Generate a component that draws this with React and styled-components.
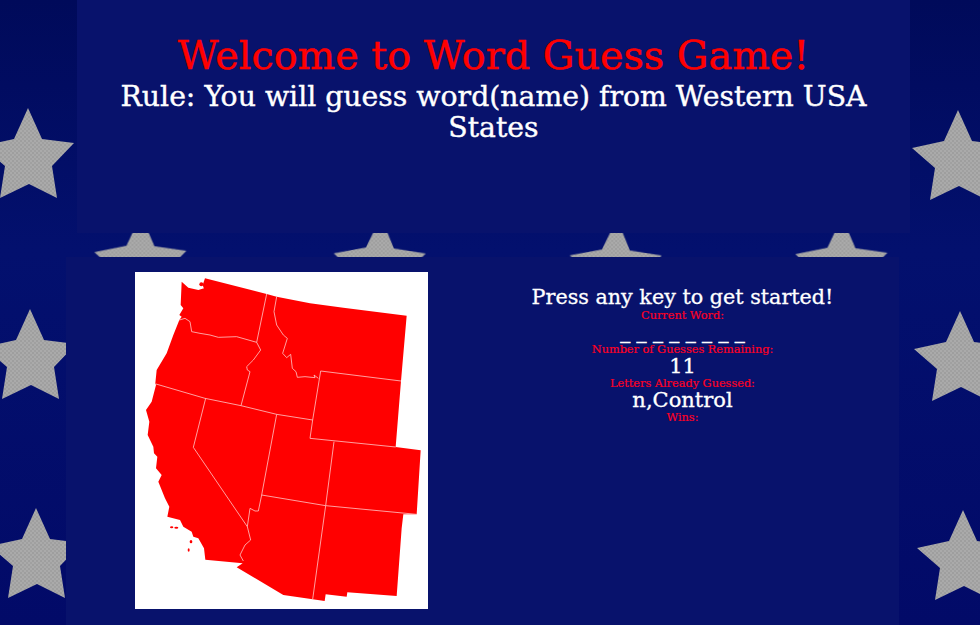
import React from 'react';
import styled, { createGlobalStyle } from 'styled-components';

const GlobalStyle = createGlobalStyle`
  html, body {
    margin: 0;
    padding: 0;
    height: 100%;
    overflow: hidden;
    background: #020a62;
  }
`;

const Page = styled.div`
  position: relative;
  width: 980px;
  height: 625px;
  overflow: hidden;
  font-family: "DejaVu Serif", "Liberation Serif", serif;
`;

const Backdrop = styled.svg`
  position: absolute;
  inset: 0;
  width: 980px;
  height: 625px;
`;

const Header = styled.header`
  position: relative;
  box-sizing: border-box;
  width: 833px;
  height: 233px;
  margin: 0 0 24px 77px;
  padding: 30px 30px 0;
  background: #08126c;
  text-align: center;
`;

const Title = styled.h1`
  margin: 0;
  font-size: 39.7px;
  line-height: 50px;
  font-weight: 400;
  color: #ff0000;
  -webkit-text-stroke: 0.5px #ff0000;
`;

const Rule = styled.h2`
  margin: 1px 0 0;
  font-size: 28.3px;
  line-height: 31px;
  font-weight: 400;
  color: #ffffff;
  -webkit-text-stroke: 0.4px #ffffff;
`;

const Board = styled.main`
  position: relative;
  box-sizing: border-box;
  display: grid;
  grid-template-columns: 400px 433px;
  width: 833px;
  height: 368px;
  margin-left: 66px;
  padding-top: 15px;
  background: #08126c;
`;

const MapFrame = styled.svg`
  display: block;
  width: 293px;
  height: 337px;
  margin-left: 69px;
  background: #ffffff;
`;

const Status = styled.section`
  padding-top: 13px;
  text-align: center;
`;

const Prompt = styled.h3`
  margin: 0;
  font-size: 20.7px;
  line-height: 24px;
  font-weight: 400;
  color: #ffffff;
  -webkit-text-stroke: 0.3px #ffffff;
`;

const Label = styled.div`
  font-size: 11.3px;
  line-height: 14px;
  color: #ff0022;
  -webkit-text-stroke: 0.2px #ff0022;
`;

const Value = styled.div`
  font-size: 21px;
  line-height: 18px;
  padding-bottom: 2px;
  color: #ffffff;
  -webkit-text-stroke: 0.3px #ffffff;
`;

const Blanks = styled.div`
  font-size: 20px;
  line-height: 16px;
  padding-bottom: 4px;
  color: #ffffff;
  -webkit-text-stroke: 0.5px #ffffff;
`;

const starShape = [
  [0, 0], [14, 31], [46, 35], [24, 58], [29, 90], [1, 76],
  [-28, 90], [-23, 58], [-46, 38], [-14, 31],
];

const stars = [
  [28, 108, 0], [30, 309, 0], [36, 508, 0],
  [141, 215, 1], [381, 217, 2], [617, 219, 2], [842, 217, 1],
  [958, 110, 0], [960, 311, 0], [963, 510, 0],
];

const outline = `155,50 175,68 205,75 222,70 230,95 218,60 225,40 410,87 440,95 540,115 640,128 830,152
  813,348 797,546 872,556 860,748 820,748 815,790 800,993 652,982 650,995 587,988 584,1008 548,1003
  460,990 320,907 338,895 226,884 222,850 205,820 190,815 185,800 160,785 150,765 112,755 118,725 105,700
  85,650 95,630 78,610 82,575 72,565 70,545 53,510 58,470 48,435 65,410 78,360 76,355 80,315 110,265 130,210
  148,165 155,155 148,150 160,130 152,120`;

const borders = [
  '148,165 165,160 180,170 185,200 210,205 240,210 265,217 320,215 380,232',
  '410,87 380,232 392,255 370,285 350,305 352,315 360,320 333,422',
  '440,95 432,140 440,180 460,210 472,220 458,265 470,278 482,268 487,310 498,320 502,337 525,335 555,338 552,330 565,340',
  '813,348 572,318 548,465 540,520 797,546',
  '78,357 225,400 333,422 440,448 548,465',
  '227,400 190,547 352,785',
  '440,448 395,690 385,738 375,738 360,730 352,785 362,825 345,840 330,870 340,888',
  '395,690 587,722 860,748',
  '612,530 587,722 548,1003',
];

const islands = [[125, 787, 5, 3], [139, 788, 6, 3], [183, 830, 4, 5], [176, 855, 3, 5], [214, 58, 6, 6]];

const Stars = () => (
  <Backdrop viewBox="0 0 980 625">
    <defs>
      <linearGradient id="navy" x1="0" y1="0" x2="0" y2="1">
        <stop offset="0" stopColor="#000a5a" />
        <stop offset="0.4" stopColor="#03106e" />
        <stop offset="1" stopColor="#020a68" />
      </linearGradient>
      <pattern id="weave" width="4" height="4" patternUnits="userSpaceOnUse">
        <rect width="4" height="4" fill="#aaaaaa" />
        <circle cx="1" cy="1" r="0.8" fill="#8e8e8e" />
        <circle cx="3" cy="3" r="0.8" fill="#949494" />
      </pattern>
      <filter id="soft">
        <feGaussianBlur stdDeviation="0.5" />
      </filter>
    </defs>
    <rect width="980" height="625" fill="url(#navy)" />
    {stars.map(([x, y, tilt]) => (
      <polygon
        key={`${x}-${y}`}
        points={starShape.map(([px, py]) => `${x + px},${y + py}`).join(' ')}
        fill="url(#weave)"
        filter="url(#soft)"
        transform={`rotate(${tilt} ${x} ${y})`}
      />
    ))}
  </Backdrop>
);

const WesternStates = () => (
  <MapFrame viewBox="15 21 879 1011">
    <polygon points={outline} fill="#ff0000" />
    {borders.map((line) => (
      <polyline key={line} points={line} fill="none" stroke="#ffc8c8" strokeWidth="2.4" />
    ))}
    {islands.map(([cx, cy, rx, ry]) => (
      <ellipse key={cx} cx={cx} cy={cy} rx={rx} ry={ry} fill="#ff0000" />
    ))}
  </MapFrame>
);

function App() {
  return (
    <Page>
      <GlobalStyle />
      <Stars />
      <Header>
        <Title>Welcome to Word Guess Game!</Title>
        <Rule>Rule: You will guess word(name) from Western USA States</Rule>
      </Header>
      <Board>
        <div>
          <WesternStates />
        </div>
        <Status>
          <Prompt>Press any key to get started!</Prompt>
          <Label>Current Word:</Label>
          <Blanks>_ _ _ _ _ _ _ _</Blanks>
          <Label>Number of Guesses Remaining:</Label>
          <Value>11</Value>
          <Label>Letters Already Guessed:</Label>
          <Value>n,Control</Value>
          <Label>Wins:</Label>
        </Status>
      </Board>
    </Page>
  );
}

export default App;
